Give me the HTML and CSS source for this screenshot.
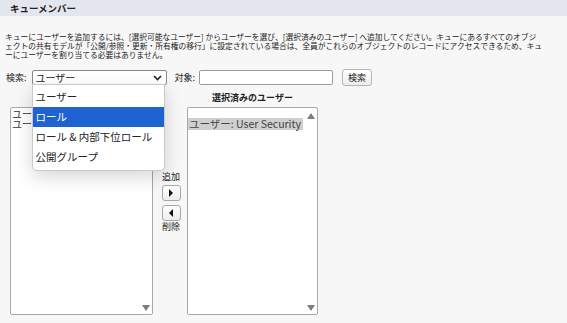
FILE: index.html
```html
<!DOCTYPE html>
<html lang="ja">
<head>
<meta charset="utf-8">
<link rel="stylesheet" href="styles.css">
</head>
<body>
<div class="header">キューメンバー</div>
<p class="desc">キューにユーザーを追加するには、[選択可能なユーザー] からユーザーを選び、[選択済みのユーザー] へ追加してください。キューにあるすべてのオブジ<br>ェクトの共有モデルが「公開/参照・更新・所有権の移行」に設定されている場合は、全員がこれらのオブジェクトのレコードにアクセスできるため、キュ<br>ーにユーザーを割り当てる必要はありません。</p>
<div class="search-row">
  <span class="lbl">検索:</span>
  <div class="select-wrap">
    <div class="select">
      <span>ユーザー</span>
      <svg class="chev" width="9" height="6" viewBox="0 0 9 6"><path d="M1 1 L4.5 4.5 L8 1" fill="none" stroke="#222" stroke-width="1.6"/></svg>
    </div>
    <ul class="menu">
      <li>ユーザー</li>
      <li class="active">ロール</li>
      <li>ロール &amp; 内部下位ロール</li>
      <li>公開グループ</li>
    </ul>
  </div>
  <span class="lbl lbl-target">対象:</span>
  <input class="text" type="text">
  <button class="btn">検索</button>
</div>
<div class="picker">
  <div class="col col-left">
    <div class="col-label">選択可能なユーザー</div>
    <div class="list">
      <div class="items">
        <div class="item">ユーザー: Admin</div>
        <div class="item">ユーザー: Guest</div>
      </div>
      <div class="scroll"><span class="tri up hidden"></span><span class="tri down"></span></div>
    </div>
  </div>
  <div class="col-mid">
    <div class="mid-label">追加</div>
    <button class="arrow-btn"><span class="tri right"></span></button>
    <button class="arrow-btn"><span class="tri left"></span></button>
    <div class="mid-label">削除</div>
  </div>
  <div class="col col-right">
    <div class="col-label">選択済みのユーザー</div>
    <div class="list">
      <div class="items">
        <div class="item selected">ユーザー: User Security</div>
      </div>
      <div class="scroll"><span class="tri up"></span><span class="tri down"></span></div>
    </div>
  </div>
</div>
</body>
</html>
```
FILE: styles.css
```css
* { box-sizing: border-box; }
body {
  margin: 0;
  background: #f7f7f7;
  font-family: "Noto Sans CJK JP", "Noto Sans", sans-serif;
  color: #222;
}
.header {
  height: 16px;
  line-height: 16px;
  background: #e4e6ee;
  padding-left: 10px;
  font-size: 9.5px;
  font-weight: bold;
  color: #222;
}
.desc {
  margin: 16px 0 0 0;
  padding-left: 5px;
  font-size: 7.75px;
  line-height: 9px;
  white-space: nowrap;
  color: #222;
}
.search-row {
  display: flex;
  align-items: center;
  height: 17px;
  margin-top: 10px;
  padding-left: 6px;
}
.lbl {
  font-size: 9px;
  margin-right: 5px;
}
.lbl-target { margin-left: 8px; margin-right: 4px; }
.select-wrap {
  position: relative;
  width: 135px;
  height: 15px;
}
.select {
  height: 15px;
  border: 1px solid #8a8a8a;
  border-radius: 2px;
  background: #fff;
  display: flex;
  align-items: center;
  justify-content: space-between;
  padding: 0 4px 0 3px;
  font-size: 10px;
  line-height: 13px;
}
.chev { display: block; }
.menu {
  position: absolute;
  left: 0;
  top: 14px;
  width: 133px;
  margin: 0;
  padding: 2px 0 3px 0;
  list-style: none;
  background: #fff;
  border: 1px solid #c9c9c9;
  border-radius: 0 0 5px 5px;
  box-shadow: 0 6px 18px rgba(0,0,0,0.16);
  z-index: 5;
}
.menu li {
  height: 20px;
  line-height: 20px;
  padding-left: 3px;
  font-size: 10.5px;
  color: #222;
}
.menu li.active {
  background: #1f63d2;
  color: #fff;
}
.text {
  width: 134px;
  height: 15px;
  border: 1px solid #9a9a9a;
  border-radius: 2px;
  background: #fff;
  margin: 0;
  padding: 0;
}
.btn {
  margin: 0 0 0 9px;
  width: 30px;
  height: 17px;
  padding: 0;
  border: 1px solid #b5b5b5;
  border-radius: 3px;
  background: linear-gradient(#ffffff, #ececec);
  font-family: inherit;
  font-size: 9px;
  color: #222;
}
.picker {
  display: flex;
  padding-left: 10px;
}
.col { display: flex; flex-direction: column; }
.col-left { width: 143px; }
.col-right { width: 131px; }
.col-label {
  margin-top: 6px;
  height: 12px;
  line-height: 12px;
  text-align: center;
  font-size: 9px;
  font-weight: bold;
}
.list {
  margin-top: 3px;
  height: 208px;
  border: 1px solid #a9a9a9;
  border-radius: 2px;
  background: #fff;
  display: flex;
  overflow: hidden;
}
.items {
  flex: 1;
  min-width: 0;
  padding-top: 1px;
  overflow: hidden;
}
.item {
  font-size: 10px;
  line-height: 10px;
  height: 10px;
  padding-left: 1px;
  white-space: nowrap;
  color: #333;
}
.col-right .item { height: 12px; line-height: 12px; font-size: 10.5px; }
.item.selected {
  background: #cfcfcf;
  color: #444;
  display: inline-block;
  padding-right: 2px;
}
.scroll {
  width: 12px;
  display: flex;
  flex-direction: column;
  justify-content: space-between;
  align-items: center;
  padding: 5px 0 3px 0;
}
.tri {
  display: block;
  width: 0;
  height: 0;
}
.tri.up {
  border-left: 4px solid transparent;
  border-right: 4px solid transparent;
  border-bottom: 6px solid #7d7d7d;
}
.tri.down {
  border-left: 4px solid transparent;
  border-right: 4px solid transparent;
  border-top: 6px solid #7d7d7d;
}
.tri.hidden { visibility: hidden; }
.col-mid {
  width: 34px;
  display: flex;
  flex-direction: column;
  align-items: center;
  padding-top: 85px;
  padding-left: 2px;
}
.mid-label {
  font-size: 9px;
  line-height: 12px;
  height: 12px;
}
.arrow-btn {
  width: 19px;
  height: 16px;
  margin: 2px 0 0 0;
  padding: 0;
  border: 1px solid #a8a8a8;
  border-radius: 3px;
  background: linear-gradient(#ffffff, #ededed);
  display: flex;
  align-items: center;
  justify-content: center;
}
.arrow-btn + .arrow-btn { margin-top: 4px; }
.tri.right {
  border-top: 4px solid transparent;
  border-bottom: 4px solid transparent;
  border-left: 4px solid #111;
}
.tri.left {
  border-top: 4px solid transparent;
  border-bottom: 4px solid transparent;
  border-right: 4px solid #111;
}
```
